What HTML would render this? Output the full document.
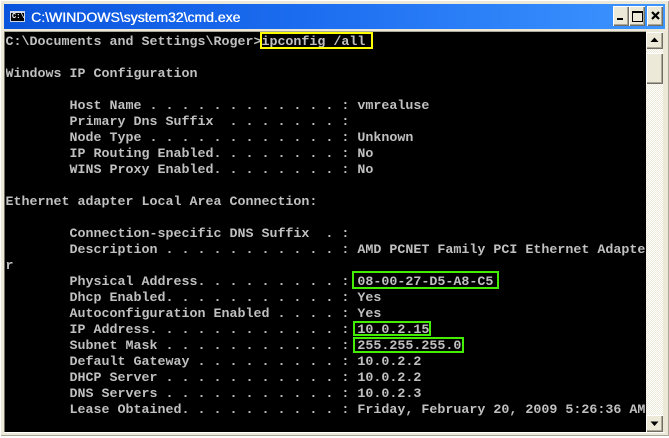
<!DOCTYPE html>
<html><head><meta charset="utf-8"><style>
html,body{margin:0;padding:0;background:#fff}
#w{position:relative;width:669px;height:438px;overflow:hidden;background:#ece9d8}
#w div{position:absolute}
pre{position:absolute;left:5.5px;top:35px;margin:0;font:bold 13.33px/16px "Liberation Mono",monospace;color:#c0c0c0;white-space:pre;width:640px;overflow:hidden}
.t{font:14px/16px "Liberation Sans",sans-serif;color:#fff;text-shadow:0.4px 0 0 #fff}
.b{background:#ece9d8;box-shadow:inset 1px 1px 0 #fff,inset -1px -1px 0 #716f64,inset -2px -2px 0 #aca899}
.g{border:2px solid #44ee00;box-sizing:border-box}
.d{background-color:#f6f4ec;background-image:repeating-conic-gradient(#ece9d8 0 25%,#fff 0 50%);background-size:2px 2px}
</style></head><body><div id="w">
<div style="left:0;top:0;width:669px;height:436px;background:#ece9d8;box-shadow:inset 1px 1px 0 #fff,inset -1px -1px 0 #aca899"></div>
<div style="left:0;top:436px;width:669px;height:2px;background:#fff"></div>
<div style="left:4px;top:4px;width:661px;height:25px;background:linear-gradient(90deg,#0a55dc 0,#1c6cf0 45%,#3d95ff 100%)"></div>
<div style="left:10px;top:11px;background:#000;border:1px solid #cfd6e6;box-sizing:content-box;border-top:2px solid #cfd6e6;width:13px;height:8px"></div>
<div style="left:12px;top:13px;font:bold 7px/8px 'Liberation Mono',monospace;color:#fff">C:\</div>
<div class="t" style="left:31px;top:9px">C:\WINDOWS\system32\cmd.exe</div>
<div class="b" style="left:613px;top:6px;width:16px;height:20px"></div>
<div style="left:617px;top:18px;width:6px;height:2px;background:#000"></div>
<div class="b" style="left:629px;top:6px;width:16px;height:20px"></div>
<div style="left:632px;top:11px;width:9px;height:8px;border:1px solid #000;border-top-width:2px"></div>
<div class="b" style="left:647px;top:6px;width:16px;height:20px"></div>
<svg style="position:absolute;left:651px;top:11px" width="9" height="9" viewBox="0 0 9 9"><path d="M1 1L8 8M8 1L1 8" stroke="#000" stroke-width="2.2" fill="none"/></svg>
<div style="left:4px;top:29px;width:661px;height:3px;background:#ece9d8"></div>
<div style="left:4px;top:31px;width:642px;height:1px;background:#aca899"></div>
<div style="left:5px;top:32px;width:641px;height:400px;background:#000"></div>
<div style="left:4px;top:32px;width:1px;height:401px;background:#716f64"></div>
<div style="left:4px;top:432px;width:661px;height:1px;background:#fff"></div>
<div class="d" style="left:646px;top:32px;width:17px;height:400px"></div>
<div class="b" style="left:646px;top:32px;width:17px;height:17px"></div>
<svg style="position:absolute;left:650px;top:37px" width="9" height="6"><path d="M4.5 0.5L8.5 5H0.5Z" fill="#000"/></svg>
<div class="b" style="left:646px;top:53px;width:17px;height:31px"></div>
<div class="b" style="left:646px;top:415px;width:17px;height:17px"></div>
<svg style="position:absolute;left:650px;top:421px" width="9" height="6"><path d="M0.5 0.5H8.5L4.5 5Z" fill="#000"/></svg>
<pre>C:\Documents and Settings\Roger&gt;ipconfig /all

Windows IP Configuration

        Host Name . . . . . . . . . . . . : vmrealuse
        Primary Dns Suffix  . . . . . . . :
        Node Type . . . . . . . . . . . . : Unknown
        IP Routing Enabled. . . . . . . . : No
        WINS Proxy Enabled. . . . . . . . : No

Ethernet adapter Local Area Connection:

        Connection-specific DNS Suffix  . :
        Description . . . . . . . . . . . : AMD PCNET Family PCI Ethernet Adapte
r
        Physical Address. . . . . . . . . : 08-00-27-D5-A8-C5
        Dhcp Enabled. . . . . . . . . . . : Yes
        Autoconfiguration Enabled . . . . : Yes
        IP Address. . . . . . . . . . . . : 10.0.2.15
        Subnet Mask . . . . . . . . . . . : 255.255.255.0
        Default Gateway . . . . . . . . . : 10.0.2.2
        DHCP Server . . . . . . . . . . . : 10.0.2.2
        DNS Servers . . . . . . . . . . . : 10.0.2.3
        Lease Obtained. . . . . . . . . . : Friday, February 20, 2009 5:26:36 AM</pre>
<div style="left:260px;top:32px;width:113px;height:17px;border:2px solid #ffff00;box-sizing:border-box"></div>
<div class="g" style="left:352px;top:271px;width:147px;height:18px"></div>
<div class="g" style="left:353px;top:321px;width:78px;height:15px"></div>
<div class="g" style="left:353px;top:337px;width:111px;height:16px"></div>
</div></body></html>
